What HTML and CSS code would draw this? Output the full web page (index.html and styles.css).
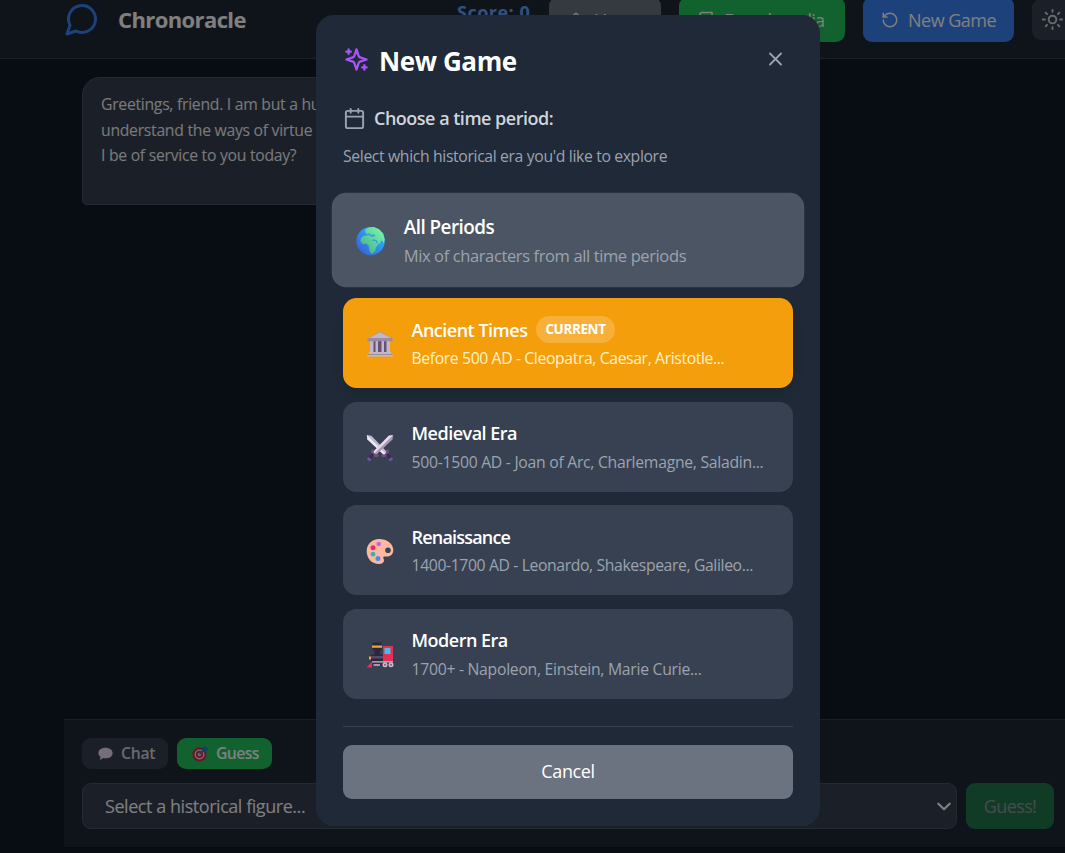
FILE: index.html
```html
<!DOCTYPE html>
<html lang="en">

<head>
    <meta charset="UTF-8">
    <meta name="viewport" content="width=device-width, initial-scale=1.0">
    <title>Chronoracle</title>
    <link rel="stylesheet" href="styles.css">
</head>

<body>
    <div class="app">
        <header class="header">
            <svg class="logo icon" viewBox="0 0 24 24"><path d="M7.9 20A9 9 0 1 0 4 16.1L2 22Z"/></svg>
            <h1 class="brand">Chronoracle</h1>
            <div class="score">Score: 0</div>
            <nav class="actions">
                <button class="btn btn-home">
                    <svg class="icon" viewBox="0 0 24 24"><path d="m3 10 9-7 9 7v11H3Z"/><path d="M9 21v-9h6v9"/></svg>
                    <span>Home</span>
                </button>
                <button class="btn btn-book">
                    <svg class="icon" viewBox="0 0 24 24"><path d="M4 19.5v-15A2.5 2.5 0 0 1 6.500 2H20v20H6.500a2.500 2.500 0 0 1 0-5H20"/></svg>
                    <span>Encyclopedia</span>
                </button>
                <button class="btn btn-new">
                    <svg class="icon" viewBox="0 0 24 24"><path d="M3 12a9 9 0 1 0 9-9 9.750 9.750 0 0 0-6.740 2.740L3 8"/><path d="M3 3v5h5"/></svg>
                    <span>New Game</span>
                </button>
                <button class="btn-theme" aria-label="Toggle theme">
                    <svg class="icon" viewBox="0 0 24 24"><circle cx="12" cy="12" r="4"/><path d="M12 2v2M12 20v2M4.930 4.930l1.410 1.410M17.660 17.660l1.410 1.410M2 12h2M20 12h2M6.340 17.660l-1.410 1.410M19.070 4.930l-1.410 1.410"/></svg>
                </button>
            </nav>
        </header>

        <main class="messages">
            <div class="bubble">Greetings, friend. I am but a humble man who seeks to<br>understand the ways of virtue and wisdom. How may<br>I be of service to you today?</div>
        </main>

        <footer class="composer">
            <div class="modes">
                <button class="mode mode-chat">
                    <svg class="mode-icon" viewBox="0 0 18 18"><path fill="#e9dff0" d="M9 3c4.500 0 7.500 2.400 7.500 5.700S13.500 14 9 14c-.8 0-1.600-.1-2.300-.3L3 16l.8-3.500C2.300 11.500 1.500 10.200 1.500 8.700 1.500 5.400 4.500 3 9 3Z"/></svg>
                    <span>Chat</span>
                </button>
                <button class="mode mode-guess">
                    <svg class="mode-icon" viewBox="0 0 18 18"><circle cx="8" cy="10" r="7.500" fill="#d5294d"/><circle cx="8" cy="10" r="5.300" fill="#f3dce9"/><circle cx="8" cy="10" r="3.800" fill="#d5294d"/><circle cx="8" cy="10" r="1.900" fill="#f3dce9"/><path d="m8 10 5-5" stroke="#5b7ca5" stroke-width="1.500"/><path fill="#1689d5" d="m10.500 4.500 3.500-4 .7 2.300L17.500 4l-3.500 4-3.500-.5Z"/></svg>
                    <span>Guess</span>
                </button>
            </div>
            <div class="guess-row">
                <div class="select">
                    <span>Select a historical figure...</span>
                    <svg class="icon" viewBox="0 0 12 8"><path d="m1 1.500 5 5 5-5"/></svg>
                </div>
                <button class="btn-guess">Guess!</button>
            </div>
        </footer>
    </div>

    <div class="overlay">
        <section class="modal">
            <div class="modal-head">
                <svg class="sparkles icon" viewBox="0 0 24 24"><path d="m12 3-1.900 5.800a2 2 0 0 1-1.300 1.300L3 12l5.800 1.900a2 2 0 0 1 1.300 1.300L12 21l1.900-5.800a2 2 0 0 1 1.300-1.300L21 12l-5.800-1.900a2 2 0 0 1-1.300-1.300Z"/><path d="M5 3v4M3 5h4M19 17v4M17 19h4"/></svg>
                <h2>New Game</h2>
                <button class="close" aria-label="Close">
                    <svg class="icon" viewBox="0 0 24 24"><path d="M18 6 6 18M6 6l12 12"/></svg>
                </button>
            </div>

            <div class="prompt">
                <svg class="icon" viewBox="0 0 24 24"><rect x="3" y="4" width="18" height="18" rx="2"/><path d="M8 2v4M16 2v4M3 10h18"/></svg>
                <h3>Choose a time period:</h3>
            </div>
            <p class="hint">Select which historical era you'd like to explore</p>

            <div class="periods">
                <button class="period hovered">
                    <svg class="emoji" viewBox="0 0 28 28">
                        <defs>
                            <linearGradient id="sea" x1="1" y1="0" x2="0" y2="1"><stop offset="0" stop-color="#27c6ff"/><stop offset=".5" stop-color="#2d91ee"/><stop offset="1" stop-color="#3c55d0"/></linearGradient>
                            <linearGradient id="land" x1="1" y1="0" x2="0" y2="1"><stop offset="0" stop-color="#78ffb2"/><stop offset="1" stop-color="#49a57e"/></linearGradient>
                        </defs>
                        <circle cx="14" cy="14" r="13.500" fill="url(#sea)"/>
                        <path fill="url(#land)" d="M8.500 3.500 12 1l5-.3 5 2 4 4 1.500 6-1 3.300-1.500-2.500-1.500.8-.8 2.700-2.200-2-1-2-3.500-.8-.3 1.500 2.800.3L20 16l2 .2-3 4-.5 3-3 2.800-2-1-1-4-.2-2.500-2-2-4 .2-2-2.500.5-3L7.500 9l5-.5 3 1.500 3-.5-.5-1.800-4 .3-1.500-1.500-2 1L9 5.500Z"/>
                    </svg>
                    <div class="info">
                        <div class="name">All Periods</div>
                        <div class="desc">Mix of characters from all time periods</div>
                    </div>
                </button>
                <button class="period current">
                    <svg class="emoji" viewBox="0 0 28 28">
                        <path fill="#9b8ca4" d="M1.500 8.500 14 1.500l12.500 7V11h-25Z"/>
                        <path fill="#c1b5ca" d="m3 8 11-6 11 6Z"/>
                        <path fill="#675273" d="M4 11h20v12H4Z"/>
                        <path fill="#c2b7ca" d="M4 11h3.500v12H4Zm5.500 0H12v12H9.500Zm6 0H18v12h-2.500Zm5 0H24v12h-3.500ZM3 22h22v2h1.500v2.500h-25V24H3Z"/>
                        <path fill="#9b8ca4" d="M2 10h24v1.200H2Zm0 14h24v1H2Z"/>
                    </svg>
                    <div class="info">
                        <div class="name">Ancient Times <span class="badge">CURRENT</span></div>
                        <div class="desc">Before 500 AD - Cleopatra, Caesar, Aristotle...</div>
                    </div>
                </button>
                <button class="period">
                    <svg class="emoji" viewBox="0 0 28 28">
                        <path fill="#c3b9cd" d="m.8 1 4.500.8L21 18l-3 3L1.500 5.500Z"/>
                        <path fill="#eeeaf1" d="m.8 1 18.700 18.500L18 21 1.500 5.500Z"/>
                        <path fill="#a995b5" d="m27.200 1-4.500.8L7 18l3 3L26.500 5.500Z"/>
                        <path fill="#e2dde8" d="M27.200 1 8.500 19.500 7 18 22.700 1.800Z"/>
                        <path d="M6.500 16.500c-1 3 2 6 5 5M21.500 16.500c1 3-2 6-5 5" fill="none" stroke="#6f4f82" stroke-width="2.500" stroke-linecap="round"/>
                        <path d="m7 20-4 4.500M21 20l4 4.500" stroke="#432850" stroke-width="3"/>
                        <path fill="#6751a9" d="m.8 25 2-2 2.700 2.700-2 2Zm26.400 0-2-2-2.700 2.700 2 2Z"/>
                    </svg>
                    <div class="info">
                        <div class="name">Medieval Era</div>
                        <div class="desc desc-wide">500-1500 AD - Joan of Arc, Charlemagne, Saladin...</div>
                    </div>
                </button>
                <button class="period">
                    <svg class="emoji" viewBox="0 0 28 28">
                        <path fill="#ffb8a0" fill-rule="evenodd" d="M13 2c8 0 14.300 4.800 14.300 11 0 4-2.500 6.500-6 6.500-2 0-3.800-.3-4 .7-.3 1.300 1.300 2.300.5 4.300-.6 1.700-2.500 2.500-4.800 2.500C6 27 .7 21.500.7 14.200.7 7 6 2 13 2Zm9 8.500a2.800 2.800 0 1 0 0 5.600 2.800 2.800 0 0 0 0-5.600Z"/>
                        <circle cx="12.700" cy="7" r="2.300" fill="#b86be9"/>
                        <circle cx="7" cy="10.700" r="2.500" fill="#e52c72"/>
                        <circle cx="7" cy="17.200" r="2.400" fill="#2cb9b3"/>
                        <circle cx="12" cy="21.500" r="2.500" fill="#468eea"/>
                    </svg>
                    <div class="info">
                        <div class="name name-tight">Renaissance</div>
                        <div class="desc">1400-1700 AD - Leonardo, Shakespeare, Galileo...</div>
                    </div>
                </button>
                <button class="period">
                    <svg class="emoji" viewBox="0 0 28 28">
                        <path fill="#30263c" d="M6.500 1.500h9L16 8l-2 2.500v3h4V22H5v-8l3.500-.500v-3l-2-2.500Z"/>
                        <path fill="#f3a33a" d="M6 4.500h10v2.200H6ZM3 15.500h2v3H3Z"/>
                        <path fill="#e52e55" d="M17 5h10v16H17Z"/>
                        <path fill="#5b4867" d="M5 15h12v2.500H5Z"/>
                        <path fill="#46bce9" d="M18.500 7h6v6h-6Z"/>
                        <path fill="#e52e55" d="M6 20.500v6H.5Z"/>
                        <path fill="#3b2e47" d="M6 21h21v4H6Z"/>
                        <path fill="#c7bccf" d="M6 20.300h21v1.300H6Zm1.500 3H14v1.500H7.500Z"/>
                        <circle cx="19" cy="23.700" r="2.500" fill="#c8becf"/>
                        <circle cx="25" cy="23.700" r="2.500" fill="#c8becf"/>
                        <circle cx="19" cy="23.700" r="1" fill="#725d80"/>
                        <circle cx="25" cy="23.700" r="1" fill="#725d80"/>
                    </svg>
                    <div class="info">
                        <div class="name">Modern Era</div>
                        <div class="desc desc-wide">1700+ - Napoleon, Einstein, Marie Curie...</div>
                    </div>
                </button>
            </div>

            <div class="modal-foot">
                <button class="cancel">Cancel</button>
            </div>
        </section>
    </div>
</body>

</html>
```
FILE: styles.css
```css
* {
    box-sizing: border-box;
}

body {
    margin: 0;
    overflow: hidden;
    background-color: #111827;
    color: white;
    font-family: "Open Sans", "Noto Sans", sans-serif;
    font-size: 16px;
}

h1, h2, h3, p {
    margin: 0;
}

button {
    padding: 0;
    border: none;
    color: inherit;
    font-family: inherit;
    white-space: nowrap;
    cursor: pointer;
}

.icon {
    flex-shrink: 0;
    fill: none;
    stroke: currentColor;
    stroke-width: 2;
    stroke-linecap: round;
    stroke-linejoin: round;
}

.app {
    display: flex;
    flex-direction: column;
    height: 853px;
    padding-bottom: 6px;
}

/* Header */
.header {
    display: flex;
    align-items: center;
    flex-shrink: 0;
    width: 1100px;
    height: 59px;
    padding: 0 0 19px 63px;
    background-color: #1f2937;
    border-bottom: 1px solid #374151;
}

.logo {
    width: 36px;
    height: 36px;
    margin: -1px 0 0 1px;
    color: #3b82f6;
}

.brand {
    width: 339px;
    margin: -2px 0 0 18px;
    font-size: 22px;
    letter-spacing: -0.6px;
}

.score {
    width: 92px;
    margin-bottom: 16px;
    color: #60a5fa;
    font-size: 18px;
    font-weight: 700;
    letter-spacing: 0.5px;
}

.actions {
    display: flex;
    align-items: center;
    gap: 18px;
    flex-shrink: 0;
}

.btn {
    display: flex;
    align-items: center;
    gap: 9px;
    height: 45px;
    padding: 0 18px;
    border-radius: 9px;
    font-size: 18px;
    letter-spacing: -0.5px;
}

.btn .icon {
    width: 18px;
    height: 18px;
}

.btn-home {
    width: 112px;
    background-color: #6b7280;
}

.btn-book {
    width: 166px;
    background-color: #22c55e;
    letter-spacing: -0.75px;
}

.btn-new {
    width: 151px;
    background-color: #3b82f6;
}

.btn-theme {
    width: 41px;
    height: 41px;
    padding: 9px;
    background-color: #374151;
    border-radius: 9px;
    color: #d1d5db;
}

.btn-theme .icon {
    width: 23px;
    height: 23px;
}

/* Conversation */
.messages {
    flex: 1;
    padding: 18px 18px 0 82px;
}

.bubble {
    width: 620px;
    height: 128px;
    padding: 14px 18px;
    background-color: #374151;
    border: 1px solid #4b5563;
    border-radius: 18px 18px 18px 5px;
    color: #f3f4f6;
    font-size: 15.75px;
    line-height: 25.6px;
    letter-spacing: -0.28px;
}

.composer {
    height: 128px;
    margin-left: 64px;
    padding: 18px 11px 0 18px;
    background-color: #1f2937;
    border-top: 1px solid #374151;
}

.modes {
    display: flex;
    gap: 9px;
}

.mode {
    display: flex;
    align-items: center;
    gap: 7px;
    height: 31px;
    padding: 0 0 1px 15px;
    border-radius: 9px;
    font-size: 15.75px;
    font-weight: 600;
    letter-spacing: -0.6px;
}

.mode-icon {
    width: 17px;
    height: 17px;
    margin-top: 1px;
}

.mode-chat {
    width: 86px;
    background-color: #374151;
    color: #d1d5db;
    letter-spacing: -0.3px;
}

.mode-guess {
    width: 95px;
    background-color: #22c55e;
}

.guess-row {
    display: flex;
    gap: 9px;
    margin-top: 14px;
}

.select {
    display: flex;
    flex: 1;
    align-items: center;
    justify-content: space-between;
    height: 46px;
    padding: 0 5px 0 22px;
    background-color: #374151;
    border: 1px solid #4b5563;
    border-radius: 9px;
    font-size: 18px;
    letter-spacing: -0.45px;
}

.select .icon {
    width: 14px;
    height: 9px;
}

.btn-guess {
    width: 88px;
    background-color: #22c55e;
    border-radius: 9px;
    font-size: 18px;
    letter-spacing: -0.6px;
    opacity: 0.5;
}

/* New game dialog */
.overlay {
    position: fixed;
    inset: 0;
    padding: 15px 0 0 316px;
    background-color: rgba(0, 0, 0, 0.5);
}

.modal {
    width: 504px;
    height: 811px;
    padding: 27px;
    background-color: #1f2937;
    border-radius: 18px;
}

.modal-head {
    display: flex;
    align-items: center;
    height: 36px;
}

.sparkles {
    width: 27px;
    height: 27px;
    margin-top: -1px;
    color: #a855f7;
}

.modal-head h2 {
    margin: 2px auto 0 9px;
    font-size: 26px;
    letter-spacing: -0.4px;
}

.close {
    height: 22px;
    margin: -3px 6px 0 0;
    background: none;
    color: #9ca3af;
}

.close .icon {
    width: 23px;
    height: 22px;
}

.prompt {
    display: flex;
    align-items: center;
    gap: 8px;
    height: 27px;
    margin-top: 27px;
}

.prompt .icon {
    width: 23px;
    height: 23px;
    color: #9ca3af;
}

.prompt h3 {
    margin-top: -2px;
    color: #d1d5db;
    font-size: 18px;
    font-weight: 600;
    letter-spacing: -0.5px;
}

.hint {
    height: 23px;
    margin-top: 13px;
    color: #9ca3af;
    font-size: 15.75px;
    line-height: 23px;
    letter-spacing: -0.36px;
}

.periods {
    display: flex;
    flex-direction: column;
    gap: 13.5px;
    margin-top: 26.6px;
}

.period {
    display: flex;
    align-items: center;
    gap: 18px;
    height: 90px;
    padding: 2px 22.5px 0;
    background-color: #374151;
    border-radius: 13.5px;
    text-align: left;
}

.period.hovered {
    background-color: #4b5563;
    transform: scale(1.05);
}

.period.current {
    background-color: #f59e0b;
    box-shadow: 0 8px 14px -3px rgba(0, 0, 0, 0.1);
}

.emoji {
    width: 28px;
    height: 28px;
}

.name {
    display: flex;
    align-items: center;
    gap: 9px;
    height: 29px;
    font-size: 18px;
    font-weight: 600;
    letter-spacing: -0.5px;
}

.name-tight {
    letter-spacing: -0.8px;
}

.desc {
    height: 29px;
    color: #9ca3af;
    font-size: 15.75px;
    line-height: 29px;
    letter-spacing: -0.38px;
    white-space: nowrap;
}

.desc-wide {
    letter-spacing: -0.28px;
}

.current .desc {
    color: #fef3c7;
}

.badge {
    padding: 0 9px;
    background-color: rgba(255, 255, 255, 0.2);
    border-radius: 14px;
    font-size: 13.5px;
    font-weight: 700;
    line-height: 27px;
    letter-spacing: -0.4px;
}

.modal-foot {
    margin-top: 27.5px;
    padding-top: 18px;
    border-top: 1px solid #374151;
}

.cancel {
    width: 100%;
    height: 54px;
    padding-bottom: 2px;
    background-color: #6b7280;
    border-radius: 9px;
    font-size: 18px;
    letter-spacing: -0.4px;
}
```
